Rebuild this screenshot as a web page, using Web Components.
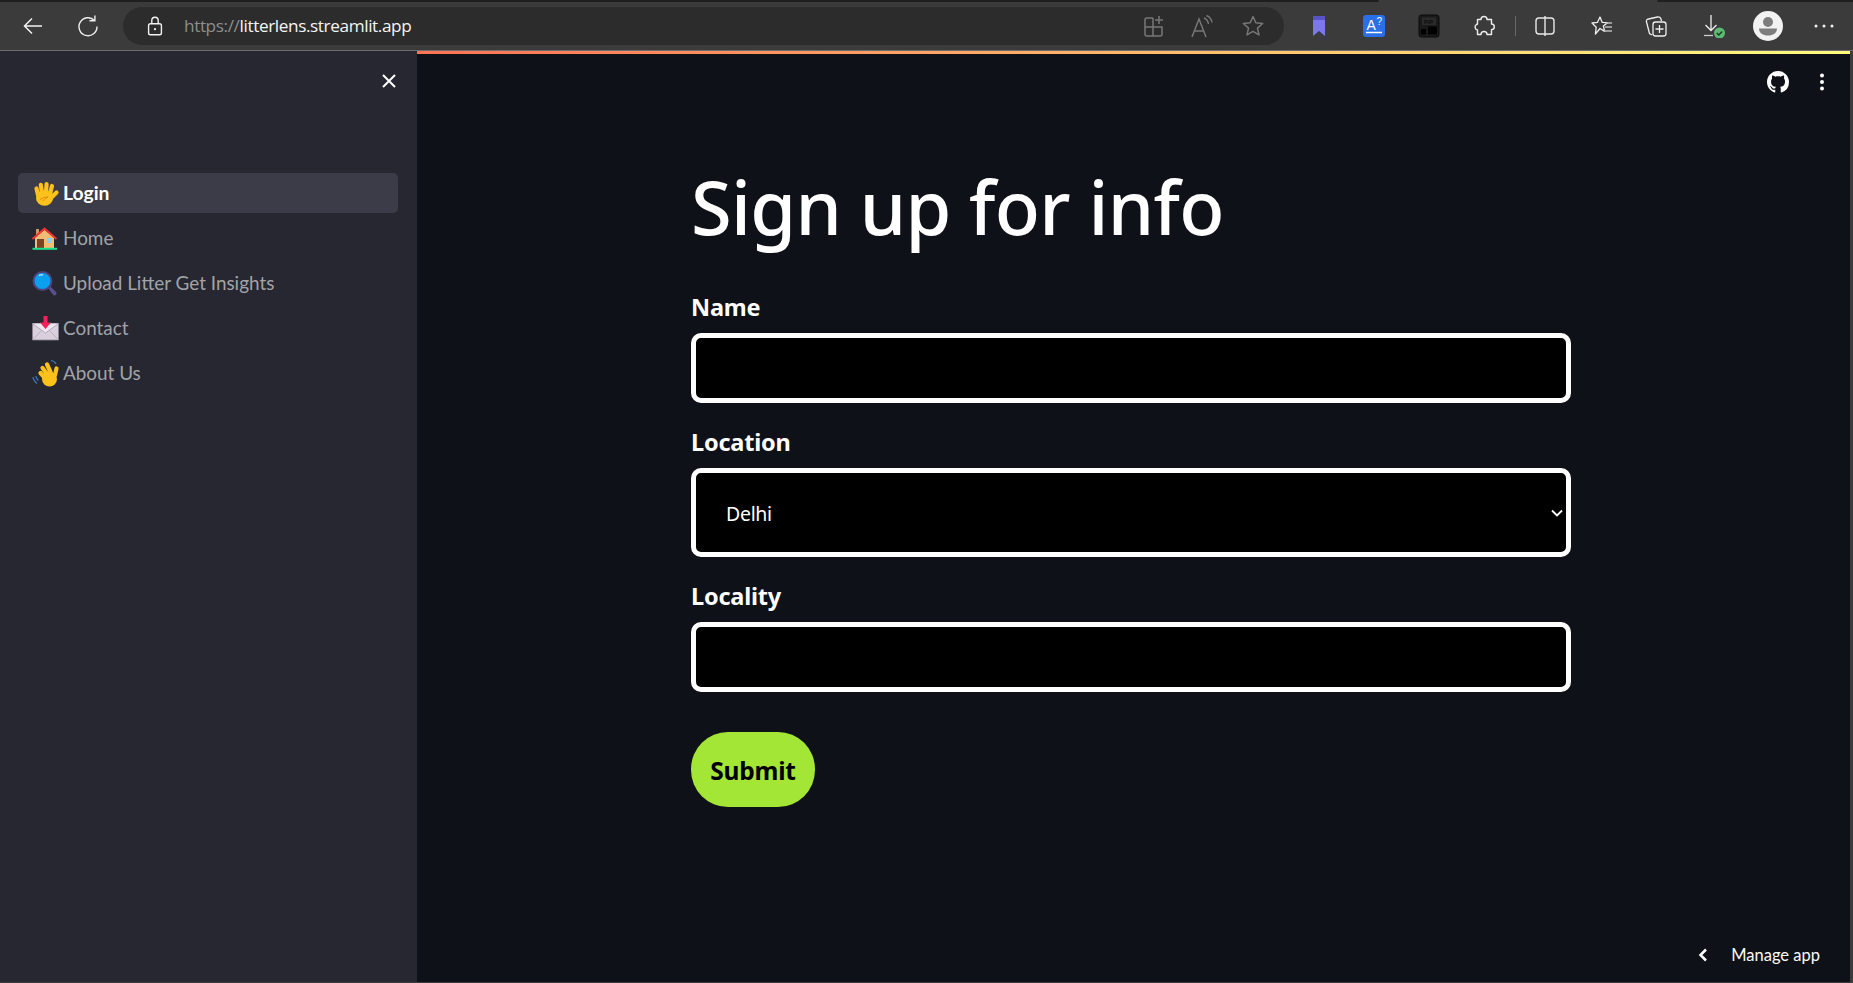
<!DOCTYPE html>
<html>
<head>
<meta charset="utf-8">
<title>Sign up for info</title>
<style>
  html, body { margin: 0; height: 100%; background: #3b3b3b; overflow: hidden; }
  body { display: grid; grid-template-rows: 51px 1fr; height: 983px; }
</style>
</head>
<body>
<browser-bar url-scheme="https://" url-host="litterlens.streamlit.app"></browser-bar>
<app-shell>
  <app-sidebar slot="side">
    <nav-item icon="hand" active>Login</nav-item>
    <nav-item icon="house">Home</nav-item>
    <nav-item icon="lens">Upload Litter Get Insights</nav-item>
    <nav-item icon="mail">Contact</nav-item>
    <nav-item icon="wave">About Us</nav-item>
  </app-sidebar>
  <signup-form></signup-form>
</app-shell>

<script>
// Icones da barra do navegador
const toolIcons = {
  back: '<path d="M21 12H4M11 4.5 3.5 12l7.5 7.5" stroke="#f2f2f2" stroke-width="1.5"/>',
  reload: '<path d="M18.5 6.5A9 9 0 1 0 21 12.5" stroke="#eee" stroke-width="1.4"/><path d="M13.5 6.8h5.4V1.5" stroke="#eee" stroke-width="1.4"/>',
  lock: '<rect x="5" y="9.5" width="14" height="12" rx="2" stroke="#f2f2f2" stroke-width="1.5"/><path d="M8.5 9.5V6a3.5 3.5 0 0 1 7 0v3.5" stroke="#f2f2f2" stroke-width="1.5"/><circle cx="12" cy="15.5" r="1.2" fill="#f2f2f2"/>',
  apps: '<path d="M12 4H6a2 2 0 0 0-2 2v14a2 2 0 0 0 2 2h13a2 2 0 0 0 2-2v-7H4M12 4v18" stroke="#777" stroke-width="1.5"/><path d="M18 2v8M14 6h8" stroke="#777" stroke-width="1.5"/>',
  read: '<path d="M2 23 9 5l7 18M4.500 17h9" stroke="#777" stroke-width="1.5"/><path d="M14 4c2.500 1 4 3 4.500 6M16.500 1.500c3 1.300 5 3.800 5.500 7" stroke="#777" stroke-width="1.4"/>',
  star: '<path d="m12 2.5 2.800 6.300 6.900.7-5.200 4.600 1.500 6.800-6-3.500-6 3.500 1.500-6.800-5.200-4.600 6.900-.7z" stroke="#777" stroke-width="1.5" stroke-linejoin="round"/>',
  mark: '<path d="M6 2h12v20l-6-5-6 5z" fill="#7b78ee"/><path d="M6 2h12v4H6z" fill="#5754c4"/>',
  translate: '<rect x="1" y="1" width="22" height="22" rx="3" fill="#2a6fe8"/><text x="4.500" y="16" fill="#fff" font-family="Liberation Sans" font-size="14">A</text><text x="14.500" y="11" fill="#fff" font-family="Liberation Sans" font-size="10">?</text><path d="M4 18.500h16" stroke="#fff" stroke-width="1.500"/>',
  pip: '<rect x="2" y="1" width="20" height="22" rx="2.500" fill="#1a1a1a" stroke="#0a0a0a"/><rect x="5" y="3.500" width="14" height="7.500" fill="#2a2a2a"/><text x="7" y="9.500" fill="#0c0c0c" font-family="Liberation Sans" font-size="5.500" font-weight="700">PiP</text><rect x="4" y="15" width="5" height="5.500" fill="#000"/><rect x="11" y="12.500" width="9" height="8" fill="#000"/>',
  puzzle: '<path d="M9 5.500a3 3 0 0 1 6 0h4.500V10a2.800 2.800 0 0 1 0 5.600v4.900H15a3 3 0 0 0-6 0H5.500V16a3 3 0 0 1-1-5.500l1-.5V5.500z" stroke="#eee" stroke-width="1.400" stroke-linejoin="round"/>',
  split: '<rect x="3" y="4" width="18" height="16" rx="3" stroke="#e8e8e8" stroke-width="1.400"/><path d="M12 2v20" stroke="#e8e8e8" stroke-width="1.400"/>',
  favs: '<path d="m10 3 2.100 5.300 5.400.4-4.100 3.400 1.200 5.300L10 14.500 5.400 20l.8-6.800L2 9l5.500-.7z" stroke="#eee" stroke-width="1.300" stroke-linejoin="round"/><path d="M16 9h6M15 13h7M14 17h8" stroke="#bbb" stroke-width="1.300"/>',
  collect: '<path d="M8 21 5.500 19.500 2.500 8q-.6-2.500 2-3l9-2q2.500-.4 3.500 2l.5 2" stroke="#eee" stroke-width="1.300"/><rect x="9" y="8" width="13" height="14" rx="2.500" stroke="#eee" stroke-width="1.300"/><path d="M15.500 11v8M11.500 15h8" stroke="#eee" stroke-width="1.300"/>',
  download: '<path d="M9 1v15M3.500 11 9 16.500 14.500 11" stroke="#eee" stroke-width="1.300"/><path d="M2 21.500h9" stroke="#ccc" stroke-width="1.300"/><circle cx="17.500" cy="19" r="5.500" fill="#5cba72"/><path d="m14.800 19 2 2 3.400-3.600" stroke="#173f22" stroke-width="1.500"/>',
  dots: '<circle cx="4" cy="12" r="1.500" fill="#f2f2f2"/><circle cx="12" cy="12" r="1.500" fill="#f2f2f2"/><circle cx="20" cy="12" r="1.500" fill="#f2f2f2"/>'
};

class ToolIcon extends HTMLElement {
  connectedCallback() {
    const size = this.getAttribute('size') || 24;
    this.attachShadow({ mode: 'open' }).innerHTML = `
      <style>
        :host { display: flex; width: ${size}px; height: ${size}px; flex: none; }
        svg { display: block; width: 100%; height: 100%; fill: none; }
      </style>
      <svg viewBox="0 0 24 24">${toolIcons[this.getAttribute('name')]}</svg>`;
  }
}
customElements.define('tool-icon', ToolIcon);

// Barra do navegador
class BrowserBar extends HTMLElement {
  connectedCallback() {
    const place = (name, gap, size) => `<tool-icon name="${name}" size="${size || 24}" style="margin-left:${gap}px"></tool-icon>`;
    this.attachShadow({ mode: 'open' }).innerHTML = `
      <style>
        :host { display: block; height: 51px; box-sizing: border-box; position: relative; background: #3b3b3b; border-bottom: 1px solid #6d6d6d; }
        .strip { height: 2px; background: linear-gradient(90deg, #1f1f1f 1378px, #3b3b3b 1379px, #3b3b3b 1657px, #1f1f1f 1658px); }
        .row { display: flex; align-items: center; height: 48px; padding-left: 21px; }
        .pill { display: flex; align-items: center; width: 1161px; height: 38px; margin-left: 23px; box-sizing: border-box; padding-left: 21px; background: #2c2c2c; border-radius: 19px; flex: none; }
        .url { margin-left: 18px; width: 957px; flex: none; font: 17.2px/24px "Open Sans", sans-serif; letter-spacing: -.39px; color: #8e8e8e; white-space: nowrap; }
        .url b { font-weight: 400; color: #f5f5f5; }
        .sep { width: 1px; height: 20px; background: #6a6a6a; margin-left: 19px; flex: none; }
        .avatar { width: 30px; height: 30px; margin-left: 27px; flex: none; }
      </style>
      <div class="strip"></div>
      <div class="row">
        <tool-icon name="back"></tool-icon>
        <tool-icon name="reload" style="margin-left:31px"></tool-icon>
        <div class="pill">
          <tool-icon name="lock" size="22"></tool-icon>
          <span class="url">${this.getAttribute('url-scheme')}<b>${this.getAttribute('url-host')}</b></span>
          ${place('apps', 0)}${place('read', 25)}${place('star', 27)}
        </div>
        ${place('mark', 23)}${place('translate', 31)}${place('pip', 31)}${place('puzzle', 31)}
        <span class="sep"></span>
        ${place('split', 17)}${place('favs', 33)}${place('collect', 30)}${place('download', 34)}
        <svg class="avatar" viewBox="0 0 30 30"><circle cx="15" cy="15" r="15" fill="#f2f2f2"/><circle cx="15" cy="11" r="5" fill="#7d7d7d"/><path d="M6 17.500h18c0 4.500-4 7-9 7s-9-2.500-9-7z" fill="#7d7d7d"/></svg>
        ${place('dots', 29)}
      </div>`;
  }
}
customElements.define('browser-bar', BrowserBar);

class AppShell extends HTMLElement {
  constructor() {
    super();
    this.attachShadow({ mode: 'open' }).innerHTML = `
      <style>
        :host { display: grid; grid-template-columns: 417px 1fr; min-height: 0; padding: 0 3px 1px 0; background: #3b3b3b; }
        ::slotted(*) { min-height: 0; }
      </style>
      <slot name="side"></slot>
      <slot></slot>`;
  }
}
customElements.define('app-shell', AppShell);

// Barra lateral
class AppSidebar extends HTMLElement {
  constructor() {
    super();
    this.attachShadow({ mode: 'open' }).innerHTML = `
      <style>
        :host { display: block; background: #262730; position: relative; padding: 122px 19px 0 18px; }
        nav { display: flex; flex-direction: column; gap: 5px; }
        .close { position: absolute; left: 381px; top: 22px; width: 16px; height: 16px; }
      </style>
      <svg class="close" viewBox="0 0 16 16"><path d="M2 2l12 12M14 2 2 14" stroke="#fff" stroke-width="2" fill="none"/></svg>
      <nav><slot></slot></nav>`;
  }
}
customElements.define('app-sidebar', AppSidebar);

const emojis = {
  hand: '<g stroke="#fcc21b" stroke-width="4.200" stroke-linecap="round" fill="none"><path d="M6 14 4.500 7.500M10 12 8.800 3.800M14 11.500l.6-8.500M18 13l2-8M19 17l5.500-5.500"/></g><ellipse cx="12.500" cy="17" rx="8.500" ry="7.800" fill="#fcc21b"/><path d="M8 18.500q4.500-3 8-2.500-3 1-5 4" stroke="#e48c15" stroke-width="1" fill="none"/>',
  house: '<path d="M4 3h3v7H4z" fill="#c99a62"/><path d="M3 11.500 12.500 4 22 11.500V22H3z" fill="#f1bd75"/><path d="M.5 13 12.500 2.500 24.500 13" stroke="#f6302f" stroke-width="2" fill="none"/><path d="M5 13h7v9H5z" fill="#7b4225"/><path d="M15 12h5v5h-5z" fill="#8fcdf5"/><path d="M.5 21.800h24.500v2H.5z" fill="#1fe08a"/>',
  lens: '<path d="m16 17 2-2 6 6q1.300 1.500 0 2.800t-2.900 0z" fill="#5b4f8f"/><circle cx="10.500" cy="10" r="9" fill="#0b9ff0" stroke="#50427f" stroke-width="2"/><path d="M7 4.500q2-1 4-.5" stroke="#9fdcff" stroke-width="1.500" fill="none"/>',
  mail: '<path d="M.5 7.500h26V24H.5z" fill="#d9cfdd" stroke="#8c8494" stroke-width=".8"/><path d="M.5 7.500 13.500 17l13-9.500" fill="#efe7ef" stroke="#a59dab" stroke-width=".8"/><path d="M.5 24 10 14M26.500 24 17 14" stroke="#b3abb9" stroke-width=".8" fill="none"/><path d="M11.500 0h4v6.500H19L13.500 13 8 6.500h3.500z" fill="#f5215d"/>',
  wave: '<g stroke="#fcc21b" stroke-width="4.200" stroke-linecap="round" fill="none"><path d="M13 17 8.500 12M15 13 10.500 7M18.500 11 15 3.500M23 14l1.500-6.500"/></g><ellipse cx="17.500" cy="18" rx="7.500" ry="7.500" fill="#fcc21b"/><path d="M1 16q.5 4 4 6.500M3.800 15q.3 2.500 2.500 4.500" stroke="#3a78c4" stroke-width="1.200" fill="none"/><path d="M19 -.5q3.500.5 5 3.500" stroke="#3a78c4" stroke-width="1.200" fill="none"/>'
};

class NavItem extends HTMLElement {
  connectedCallback() {
    this.attachShadow({ mode: 'open' }).innerHTML = `
      <style>
        :host { display: flex; align-items: center; height: 40px; padding-left: 14px; border-radius: 5px; color: #a2a3a9; font: 400 18.9px/24px Lato, sans-serif; }
        :host([active]) { background: #3b3c47; color: #fff; font-weight: 700; font-size: 19.3px; }
        svg { width: 27px; height: 25px; margin-right: 4px; flex: none; overflow: visible; }
      </style>
      <svg viewBox="0 0 27 25">${emojis[this.getAttribute('icon')]}</svg>
      <span><slot></slot></span>`;
  }
}
customElements.define('nav-item', NavItem);

// Campo com rotulo
class FormField extends HTMLElement {
  connectedCallback() {
    const kind = this.getAttribute('kind') || 'text';
    const control = kind === 'select'
      ? `<div class="wrap"><select><option>${this.getAttribute('value')}</option></select><svg viewBox="0 0 12 8"><path d="M1 1.500 6 6.500l5-5" stroke="#fff" stroke-width="1.800" fill="none"/></svg></div>`
      : `<input type="text">`;
    this.attachShadow({ mode: 'open' }).innerHTML = `
      <style>
        :host { display: block; }
        label { display: block; height: 43px; font: 700 23.5px/35px "Noto Sans", sans-serif; letter-spacing: -.2px; color: #fff; }
        input, select { display: block; width: 100%; box-sizing: border-box; background: #000; color: #fff; border: 5px solid #fff; border-radius: 10px; outline: none; margin: 0; }
        input { height: 70px; }
        select { height: 89px; appearance: none; padding: 2px 0 0 30px; font: 400 19.5px "Noto Sans", sans-serif; letter-spacing: -.3px; }
        .wrap { position: relative; }
        svg { position: absolute; right: 8px; top: 41px; width: 12px; height: 8px; }
      </style>
      <label>${this.getAttribute('label')}</label>
      ${control}`;
  }
}
customElements.define('form-field', FormField);

class SignupForm extends HTMLElement {
  constructor() {
    super();
    this.attachShadow({ mode: 'open' }).innerHTML = `
      <style>
        :host { display: block; position: relative; background: #0e1117; }
        .rainbow { height: 3px; background: linear-gradient(90deg, #ff4b4b, #fffd80) -417px 0 / 1850px 3px no-repeat; }
        .top { position: absolute; top: 20px; right: 26px; display: flex; align-items: center; gap: 31px; }
        .top svg { display: block; }
        form { width: 880px; margin-left: 274px; padding-top: 102px; display: flex; flex-direction: column; }
        h1 { margin: 0 0 32px; height: 102px; font: 500 74px/102px "Noto Sans", sans-serif; letter-spacing: -.7px; color: #fff; }
        form-field + form-field { margin-top: 22px; }
        button { align-self: flex-start; width: 124px; height: 75px; margin-top: 40px; padding: 2px 0 0; border: 0; border-radius: 37px; background: #a3e635; color: #000; font: 700 24.5px "Noto Sans", sans-serif; letter-spacing: -.2px; }
        .manage { position: absolute; right: 30px; bottom: 16px; display: flex; align-items: center; gap: 23px; color: #fafafa; font: 400 16.5px/22px Lato, sans-serif; }
      </style>
      <div class="rainbow"></div>
      <div class="top">
        <svg width="22" height="22" viewBox="0 0 16 16"><path fill="#fff" d="M8 0C3.580 0 0 3.580 0 8c0 3.540 2.290 6.530 5.470 7.590.4.070.55-.17.55-.38 0-.19-.01-.82-.01-1.490-2.010.37-2.530-.49-2.690-.94-.09-.23-.48-.94-.82-1.130-.28-.15-.68-.52-.01-.53.63-.01 1.080.58 1.230.82.720 1.210 1.870.870 2.330.660.070-.520.280-.870.510-1.070-1.780-.200-3.640-.890-3.640-3.950 0-.870.310-1.590.820-2.150-.080-.200-.360-1.020.080-2.120 0 0 .670-.210 2.200.820.640-.180 1.320-.270 2-.270s1.360.090 2 .270c1.530-1.040 2.200-.820 2.200-.820.440 1.100.160 1.920.080 2.120.510.560.820 1.270.820 2.150 0 3.070-1.870 3.750-3.650 3.950.290.250.540.730.540 1.480 0 1.070-.010 1.930-.010 2.200 0 .210.150.460.550.380A8.010 8.010 0 0 0 16 8c0-4.420-3.580-8-8-8z"/></svg>
        <svg width="4" height="18" viewBox="0 0 4 18"><circle cx="2" cy="2.500" r="2" fill="#fff"/><circle cx="2" cy="9" r="2" fill="#fff"/><circle cx="2" cy="15.500" r="2" fill="#fff"/></svg>
      </div>
      <form>
        <h1>Sign up for info</h1>
        <form-field label="Name"></form-field>
        <form-field label="Location" kind="select" value="Delhi"></form-field>
        <form-field label="Locality"></form-field>
        <button type="button">Submit</button>
      </form>
      <div class="manage">
        <svg width="10" height="14" viewBox="0 0 10 14"><path d="M8 1.500 2.500 7 8 12.500" stroke="#fff" stroke-width="2.500" fill="none"/></svg>
        <span>Manage app</span>
      </div>`;
  }
}
customElements.define('signup-form', SignupForm);
</script>
</body>
</html>
